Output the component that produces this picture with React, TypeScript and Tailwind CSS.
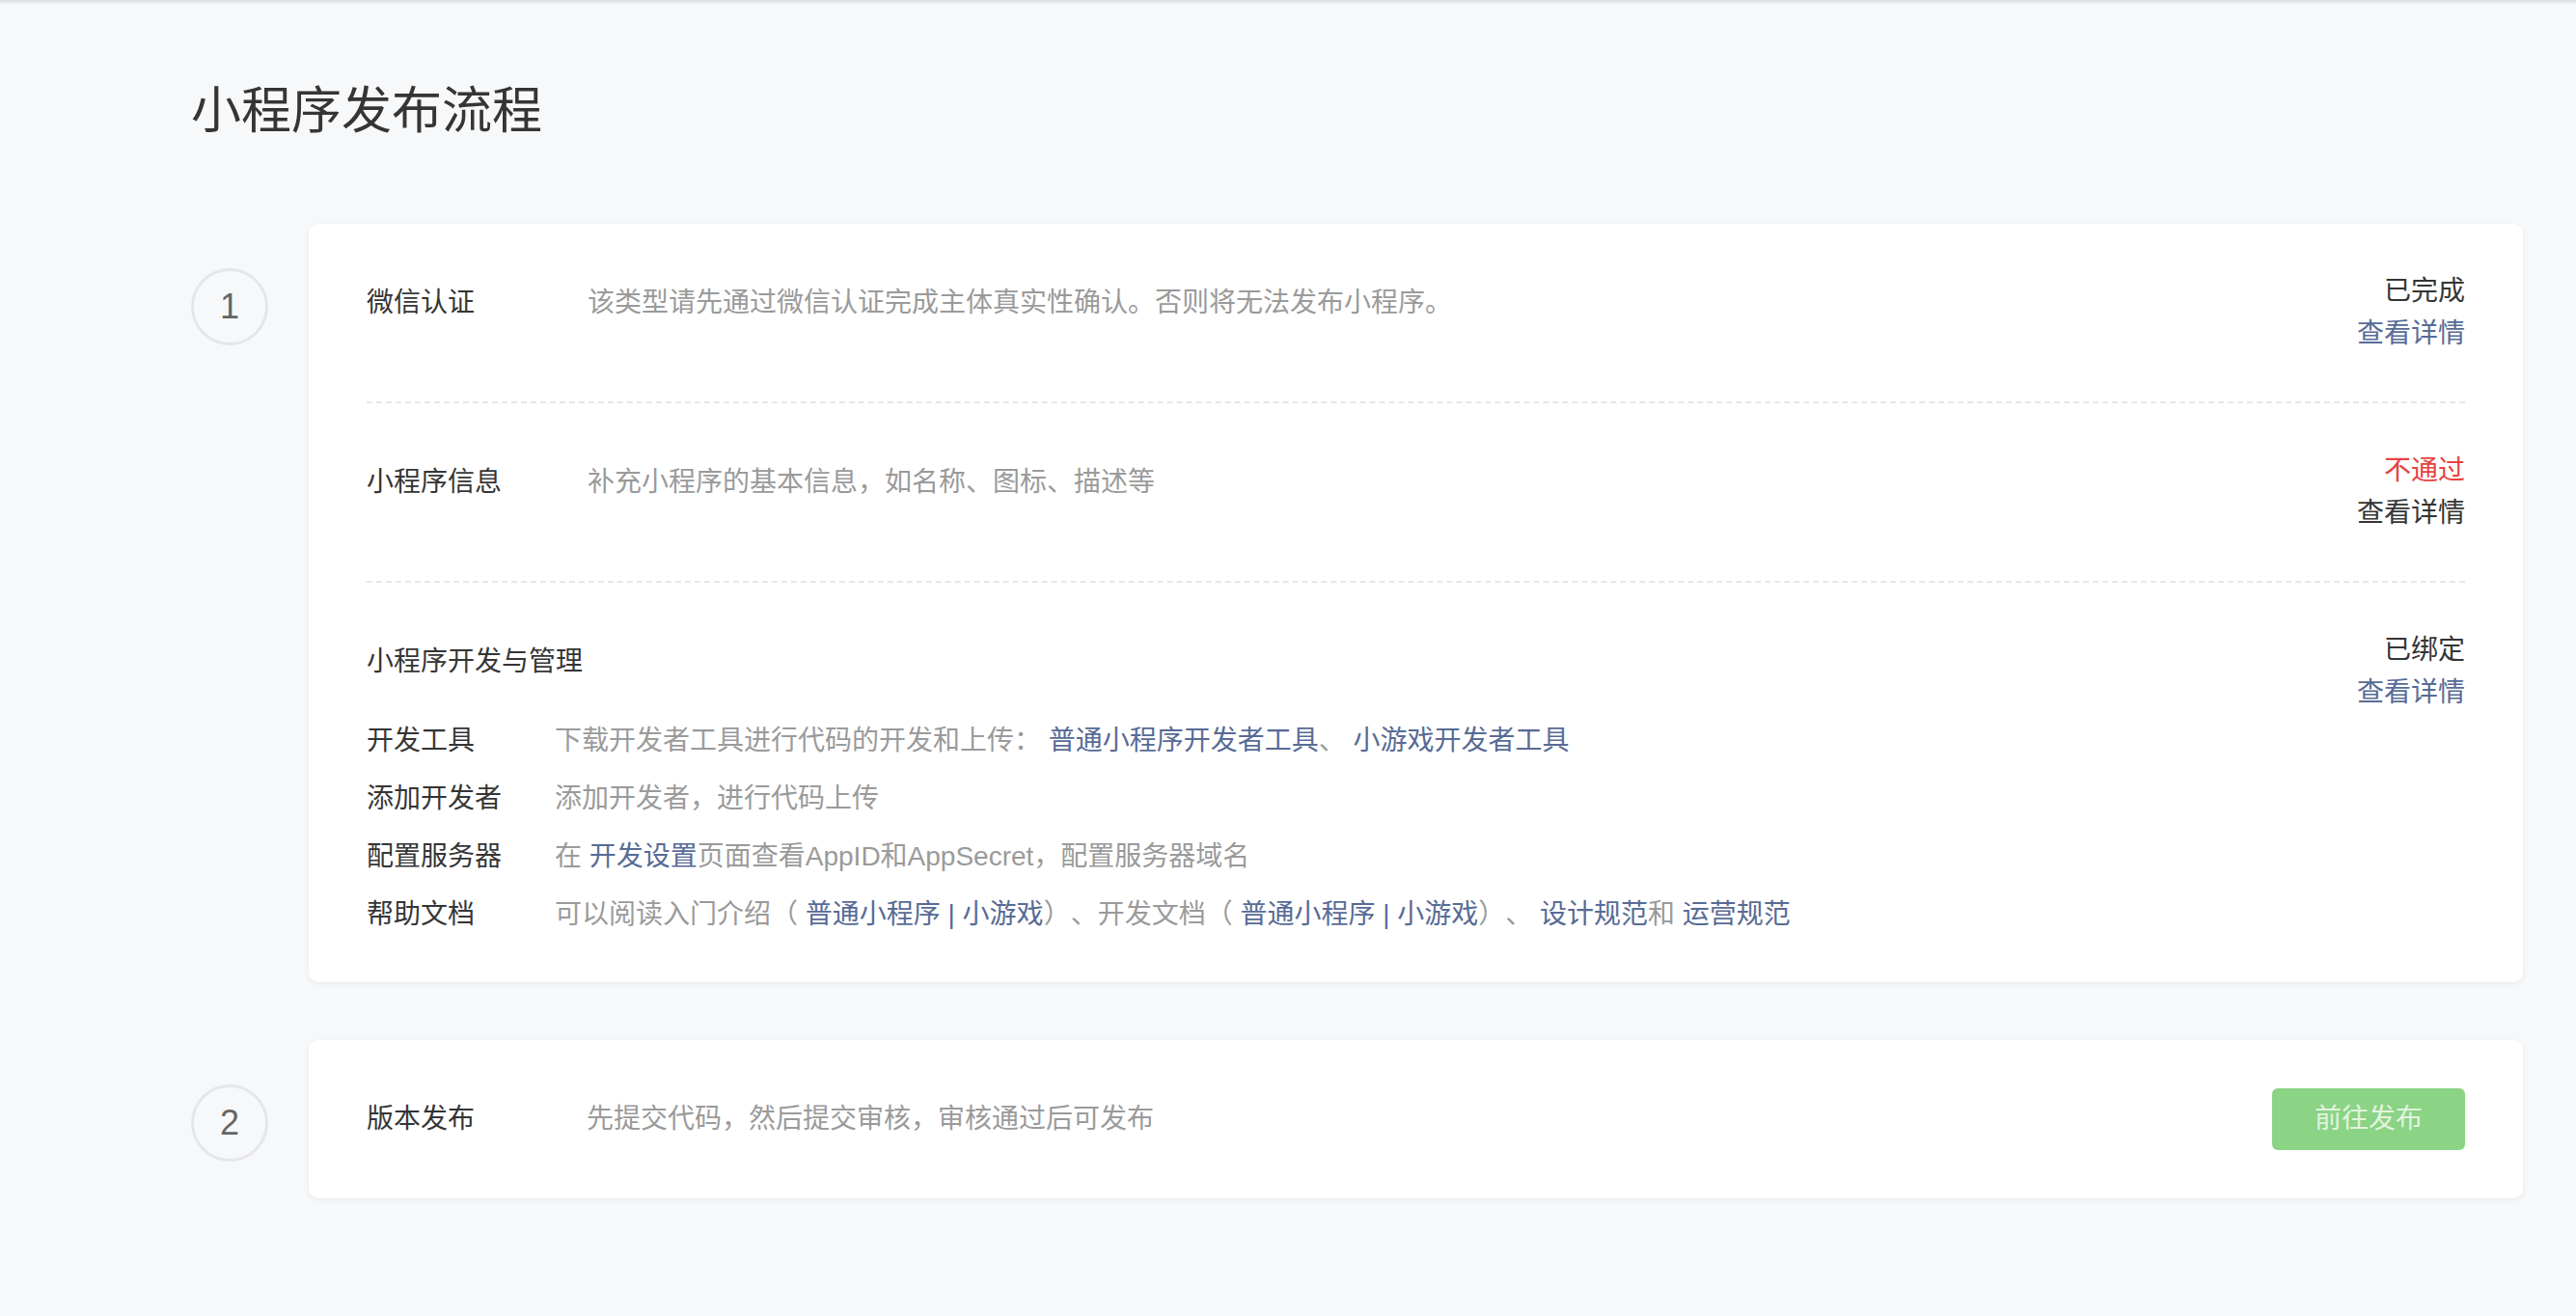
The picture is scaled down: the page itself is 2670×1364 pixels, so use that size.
import React from 'react';

const FONT = { fontFamily: '"Liberation Sans", "Noto Sans CJK SC", sans-serif' };

function Step({ n }: { n: number }) {
  return (
    <div className="mt-[46px] flex h-[80px] w-[80px] shrink-0 items-center justify-center rounded-full border-[3px] border-[#e5e6e8] text-[36px] text-[#666666]">
      {n}
    </div>
  );
}

function Link({ children }: { children: React.ReactNode }) {
  return <span className="cursor-pointer text-[#576b95]">{children}</span>;
}

function Status({ state, tone, linkTone }: { state: string; tone: string; linkTone: string }) {
  return (
    <div className="shrink-0 text-right leading-[44px]">
      <div className={tone}>{state}</div>
      <div className={`cursor-pointer ${linkTone}`}>查看详情</div>
    </div>
  );
}

const devRows: { label: string; desc: React.ReactNode }[] = [
  {
    label: '开发工具',
    desc: (
      <>
        下载开发者工具进行代码的开发和上传：{' '}
        <Link>普通小程序开发者工具</Link>、 <Link>小游戏开发者工具</Link>
      </>
    ),
  },
  { label: '添加开发者', desc: '添加开发者，进行代码上传' },
  {
    label: '配置服务器',
    desc: (
      <>
        在 <Link>开发设置</Link>页面查看AppID和AppSecret，配置服务器域名
      </>
    ),
  },
  {
    label: '帮助文档',
    desc: (
      <>
        可以阅读入门介绍（ <Link>普通小程序 | 小游戏</Link>）、开发文档（ <Link>普通小程序 | 小游戏</Link>）、{' '}
        <Link>设计规范</Link>和 <Link>运营规范</Link>
      </>
    ),
  },
];

export default function App() {
  return (
    <div
      className="min-h-screen bg-[#f7f8fa] text-[28px] text-[#353535] [text-spacing-trim:space-all]"
      style={FONT}
    >
      {/* header shadow */}
      <div className="h-[5px] bg-gradient-to-b from-[#dcdde1] to-[#f7f8fa]" />

      <div className="pl-[198px] pr-[55px]">
        <h1 className="pt-[74px] text-[52px] leading-[72px] font-normal text-[#353535]">小程序发布流程</h1>

        {/* step 1 */}
        <div className="mt-[81px] flex items-start gap-[42px]">
          <Step n={1} />
          <div className="flex-1 rounded-[10px] bg-white px-[60px] shadow-[0_2px_6px_rgba(0,0,0,0.06)]">
            <div className="flex items-start justify-between py-[48px]">
              <div className="flex pt-[12px] leading-[44px]">
                <div className="w-[229px] shrink-0">微信认证</div>
                <div className="text-[#9a9a9a]">该类型请先通过微信认证完成主体真实性确认。否则将无法发布小程序。</div>
              </div>
              <Status state="已完成" tone="text-[#353535]" linkTone="text-[#576b95]" />
            </div>

            <div className="flex items-start justify-between border-t-2 border-dashed border-[#e6e7e9] py-[48px]">
              <div className="flex pt-[12px] leading-[44px]">
                <div className="w-[229px] shrink-0">小程序信息</div>
                <div className="text-[#9a9a9a]">补充小程序的基本信息，如名称、图标、描述等</div>
              </div>
              <Status state="不通过" tone="text-[#e64340]" linkTone="text-[#353535]" />
            </div>

            <div className="flex items-start justify-between border-t-2 border-dashed border-[#e6e7e9] pt-[48px] pb-[40px]">
              <div className="pt-[12px]">
                <div className="leading-[44px]">小程序开发与管理</div>
                <div className="mt-[30px]">
                  {devRows.map((r) => (
                    <div key={r.label} className="flex h-[60px] items-center">
                      <div className="w-[195px] shrink-0">{r.label}</div>
                      <div className="whitespace-pre-wrap text-[#9a9a9a]">{r.desc}</div>
                    </div>
                  ))}
                </div>
              </div>
              <Status state="已绑定" tone="text-[#353535]" linkTone="text-[#576b95]" />
            </div>
          </div>
        </div>

        {/* step 2 */}
        <div className="mt-[60px] flex items-start gap-[42px] pb-[120px]">
          <Step n={2} />
          <div className="flex flex-1 items-center rounded-[10px] bg-white px-[60px] py-[50px] shadow-[0_2px_6px_rgba(0,0,0,0.06)]">
            <div className="w-[228px] shrink-0">版本发布</div>
            <div className="text-[#9a9a9a]">先提交代码，然后提交审核，审核通过后可发布</div>
            <button
              disabled
              className="ml-auto h-[64px] w-[200px] rounded-[6px] bg-[#8bd385] text-[28px] text-[#e2f4df]"
            >
              前往发布
            </button>
          </div>
        </div>
      </div>
    </div>
  );
}
